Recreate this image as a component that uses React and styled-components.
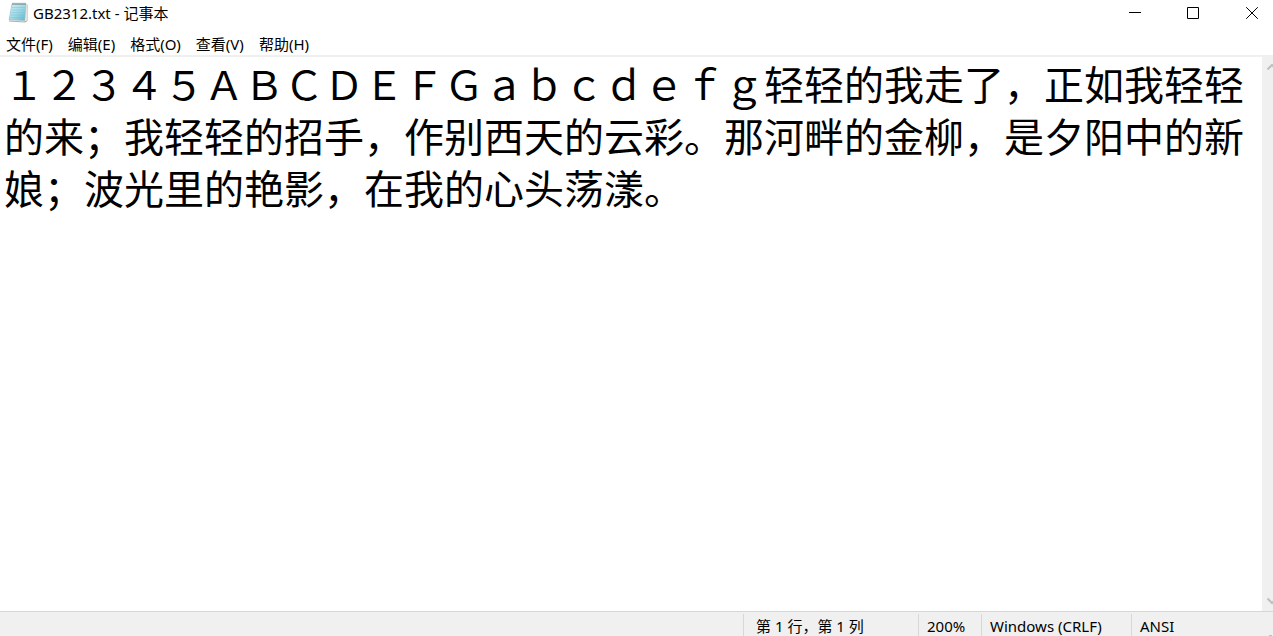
import React from "react";
import styled, { createGlobalStyle } from "styled-components";

const GlobalStyle = createGlobalStyle`
  * { box-sizing: border-box; }
  body {
    margin: 0;
    background: #fff;
    color: #000;
    font-family: "Noto Sans", "Noto Sans CJK SC", sans-serif;
    font-size: 15px;
    line-height: 20px;
  }
`;

const Window = styled.div`
  display: flex;
  flex-direction: column;
  min-height: 100vh;
  overflow: hidden;
`;

const TitleBar = styled.header`
  display: flex;
  align-items: center;
  height: 26px;
  padding-left: 8px;
`;

const Title = styled.h1`
  flex: 1;
  margin: 0 0 0 4px;
  font-size: 15px;
  font-weight: 400;
  white-space: nowrap;
`;

const CaptionButtons = styled.div`
  display: flex;
  gap: 12px;
`;

const CaptionButton = styled.button`
  display: flex;
  align-items: center;
  justify-content: center;
  width: 46px;
  height: 26px;
  padding: 0;
  border: 0;
  background: transparent;
  color: #000;
  &:last-child { width: 42px; margin-left: 3px; }
  &:hover { background: #e5e5e5; }
`;

const MenuBar = styled.nav`
  display: flex;
  gap: 15px;
  height: 31px;
  padding: 8px 6px 0;
  border-bottom: 2px solid #f0f0f0;
`;

const MenuButton = styled.button`
  height: 20px;
  padding: 0;
  border: 0;
  background: transparent;
  color: inherit;
  font: inherit;
  white-space: nowrap;
`;

const EditorArea = styled.main`
  display: flex;
  flex: 1;
`;

const Editor = styled.textarea`
  flex: 1;
  min-width: 0;
  padding: 0 4px;
  border: 0;
  outline: 0;
  resize: none;
  overflow: hidden;
  background: #fff;
  color: #000;
  font-family: "Noto Sans CJK SC", sans-serif;
  font-size: 40px;
  font-weight: 400;
  line-height: 52px;
`;

const ScrollTrack = styled.div`
  display: flex;
  flex-direction: column;
  justify-content: space-between;
  width: 11px;
  background: #f0f0f0;
`;

const ScrollButton = styled.button`
  display: flex;
  align-items: center;
  height: 20px;
  padding: 0 0 0 5px;
  border: 0;
  overflow: hidden;
  background: transparent;
  color: #bfbfbf;
  svg { flex: none; }
`;

const StatusBar = styled.footer`
  display: flex;
  justify-content: flex-end;
  height: 25px;
  padding-top: 2px;
  border-top: 1px solid #d7d7d7;
  background: #f0f0f0;
`;

const StatusCell = styled.div`
  width: ${(p) => p.$width}px;
  padding: 2px 0 0 ${(p) => (p.$wide ? 12 : 8)}px;
  border-left: 1px solid #d7d7d7;
  white-space: nowrap;
`;

const ResizeGrip = styled.span`
  align-self: flex-end;
  width: 3px;
  height: 1px;
  margin-right: 1px;
  background: #bfbfbf;
`;

const menus = ["文件(F)", "编辑(E)", "格式(O)", "查看(V)", "帮助(H)"];

const content =
  "１２３４５ＡＢＣＤＥＦＧａｂｃｄｅｆｇ轻轻的我走了，正如我轻轻的来；我轻轻的招手，作别西天的云彩。那河畔的金柳，是夕阳中的新娘；波光里的艳影，在我的心头荡漾。";

function NotepadIcon() {
  return (
    <svg width="21" height="22" viewBox="0 0 21 22" aria-hidden="true">
      <defs>
        <linearGradient id="page" x1="0" y1="0" x2="1" y2="1">
          <stop offset="0" stopColor="#d2f1f7" />
          <stop offset="0.5" stopColor="#a3dae7" />
          <stop offset="1" stopColor="#62b4ca" />
        </linearGradient>
      </defs>
      <path d="M4 2.5 L19.5 2.5 L19.5 19 L17 20.5 L1 19.5 Z" fill="#b5ab98" />
      <path d="M4 2 L18.8 2 L18.8 18.5 L16 19.5 L1 18.5 Z" fill="#f3f2ec" />
      <path d="M4 1.8 L18 1.8 L16.8 18.6 L1 17.8 Z" fill="url(#page)" stroke="#86b7c4" strokeWidth="0.5" />
      <path d="M4 5.5H17M3.7 8H16.8M3.3 10.5H16.6M3 13H16.3M2.6 15.5H16" stroke="#77bdce" strokeWidth="0.6" opacity="0.7" />
      <path d="M5 0.8V3M7 0.8V3M9 0.8V3M11 0.8V3M13 0.8V3M15 0.8V3M17 0.8V3" stroke="#657b82" strokeWidth="0.9" />
    </svg>
  );
}

function CaptionGlyph({ d }) {
  return (
    <svg width="12" height="12" viewBox="0 0 12 12" fill="none" stroke="currentColor" aria-hidden="true">
      <path d={d} />
    </svg>
  );
}

function Chevron({ d }) {
  return (
    <svg width="10" height="8" viewBox="0 0 10 8" fill="none" stroke="currentColor" strokeWidth="2" aria-hidden="true">
      <path d={d} />
    </svg>
  );
}

export default function App() {
  return (
    <>
      <GlobalStyle />
      <Window>
        <TitleBar>
          <NotepadIcon />
          <Title>GB2312.txt - 记事本</Title>
          <CaptionButtons>
            <CaptionButton aria-label="最小化">
              <CaptionGlyph d="M0 5.5H12" />
            </CaptionButton>
            <CaptionButton aria-label="最大化">
              <CaptionGlyph d="M0.5 0.5H11.5V11.5H0.5Z" />
            </CaptionButton>
            <CaptionButton aria-label="关闭">
              <CaptionGlyph d="M0.2 0.2L11.8 11.8M11.8 0.2L0.2 11.8" />
            </CaptionButton>
          </CaptionButtons>
        </TitleBar>
        <MenuBar>
          {menus.map((label) => (
            <MenuButton key={label}>{label}</MenuButton>
          ))}
        </MenuBar>
        <EditorArea>
          <Editor aria-label="文本编辑器" defaultValue={content} spellCheck={false} />
          <ScrollTrack>
            <ScrollButton aria-label="向上滚动">
              <Chevron d="M0.5 6.5L5 2L9.5 6.5" />
            </ScrollButton>
            <ScrollButton aria-label="向下滚动">
              <Chevron d="M0.5 1.5L5 6L9.5 1.5" />
            </ScrollButton>
          </ScrollTrack>
        </EditorArea>
        <StatusBar>
          <StatusCell $width={175} $wide>第 1 行，第 1 列</StatusCell>
          <StatusCell $width={63}>200%</StatusCell>
          <StatusCell $width={150}>Windows (CRLF)</StatusCell>
          <StatusCell $width={138}>ANSI</StatusCell>
          <ResizeGrip />
        </StatusBar>
      </Window>
    </>
  );
}
